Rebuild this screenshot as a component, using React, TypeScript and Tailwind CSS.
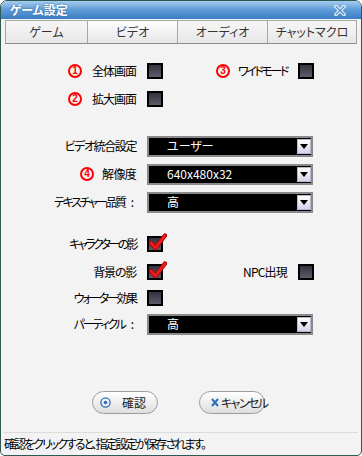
import React from "react";

function Check({ checked = false }: { checked?: boolean }) {
  return (
    <div className="relative w-[16px] h-[16px] shrink-0 border-2 border-black bg-gradient-to-b from-[#33333f] to-[#5c5c6c]">
      {checked && (
        <svg className="absolute left-[-1px] top-[-5px] w-[19px] h-[19px]" viewBox="0 0 19 19">
          <path d="M3 10 L7.5 15 L17 2.5" fill="none" stroke="#a00000" strokeWidth="4.4" strokeLinecap="round" strokeLinejoin="round" />
          <path d="M3 10 L7.5 15 L17 2.5" fill="none" stroke="#f01c1c" strokeWidth="2.8" strokeLinecap="round" strokeLinejoin="round" />
        </svg>
      )}
    </div>
  );
}

function Num({ n, mr = "mr-[10px]" }: { n: string; mr?: string }) {
  return (
    <span
      className={`w-[14px] h-[14px] shrink-0 rounded-full border-2 border-[#ff0000] flex items-center justify-center text-[#ff0000] text-[10px] font-bold leading-none font-['Liberation_Sans',sans-serif] tracking-normal ${mr}`}
    >
      {n}
    </span>
  );
}

function Select({ value }: { value: string }) {
  return (
    <div className="w-[166px] h-[21px] shrink-0 border-2 border-[#8a8a8a] bg-black flex items-center">
      <span className="pl-[18px] text-white text-[12px] leading-none">{value}</span>
      <div className="ml-auto w-[14px] h-[15px] border border-[#b8b8cc] bg-gradient-to-b from-[#ffffff] to-[#d4d4ea] flex items-center justify-center">
        <svg width="8" height="5" viewBox="0 0 8 5">
          <path d="M0 0 L8 0 L4 5 Z" fill="#000" />
        </svg>
      </div>
    </div>
  );
}

function Label({ children, w = "w-[135px]", t = "", colon = false }: { children: React.ReactNode; w?: string; t?: string; colon?: boolean }) {
  return (
    <div className={`${w} shrink-0 flex items-center justify-end text-[12px] text-black leading-none whitespace-nowrap`}>
      <span className={`flex items-center ${t}`}>{children}</span>
      {colon && <span className="ml-[6px] mr-[2px]">:</span>}
    </div>
  );
}

function Tab({ label, w, active = false, first = false }: { label: string; w: string; active?: boolean; first?: boolean }) {
  return (
    <div
      className={`${w} h-full flex items-center justify-center text-[12px] text-[#333] border-t border-r border-[#a6a6a6] ${
        first ? "border-l" : ""
      } ${active ? "bg-gradient-to-b from-[#ffffff] to-[#e6e6e6]" : "bg-gradient-to-b from-[#f6f6f6] to-[#e8e8e8]"}`}
    >
      {label}
    </div>
  );
}

export default function App() {
  return (
    <div className="w-[362px] h-[456px] overflow-hidden rounded-t-[7px] rounded-b-[5px] border border-[#2d5a52] bg-[#f3f3f3] flex flex-col font-['Noto_Sans_CJK_JP',sans-serif] [font-feature-settings:'palt']">
      {/* title bar */}
      <div className="h-[18px] shrink-0 flex items-center justify-between px-[9px] bg-gradient-to-b from-[#a6cdef] via-[#5d9ad6] to-[#3b7cc3]">
        <span className="text-white text-[12px] font-bold leading-none [text-shadow:0_0_2px_#2a5d99]">ゲーム設定</span>
        <svg width="12" height="11" viewBox="0 0 12 11" className="mr-[6px]">
          <path d="M2 1.5 L10 9.5 M10 1.5 L2 9.5" stroke="#e8f4ff" strokeWidth="3.4" strokeLinecap="square" />
          <path d="M2 1.5 L10 9.5 M10 1.5 L2 9.5" stroke="#4a88c8" strokeWidth="1.2" strokeLinecap="square" />
        </svg>
      </div>

      {/* tabs */}
      <div className="h-[24px] shrink-0 mt-[1px] ml-[4px] w-[352px] flex border-b border-[#8c8c8c]">
        <Tab label="ゲーム" w="w-[83px]" first />
        <Tab label="ビデオ" w="w-[90px]" active />
        <Tab label="オーディオ" w="w-[90px]" />
        <Tab label="チャットマクロ" w="w-[89px]" />
      </div>

      {/* body */}
      <div className="flex flex-col mt-[13px]">
        <div className="h-[28px] flex items-center">
          <Label t="tracking-[-1px]">
            <Num n="1" />
            全体画面
          </Label>
          <div className="ml-[11px]">
            <Check />
          </div>
          <Label w="w-[124px]" t="tracking-[-2.4px]">
            <Num n="3" mr="mr-[8px]" />
            ワイドモード
          </Label>
          <div className="ml-[11px]">
            <Check />
          </div>
        </div>
        <div className="h-[28px] flex items-center">
          <Label t="tracking-[-1px]">
            <Num n="2" />
            拡大画面
          </Label>
          <div className="ml-[11px]">
            <Check />
          </div>
        </div>

        <div className="h-[28px] flex items-center mt-[19px]">
          <Label t="tracking-[-1.4px]">ビデオ統合設定</Label>
          <div className="ml-[11px]">
            <Select value="ユーザー" />
          </div>
        </div>
        <div className="h-[28px] flex items-center">
          <Label t="tracking-[-0.7px]">
            <Num n="4" mr="mr-[8px]" />
            解像度
          </Label>
          <div className="ml-[11px]">
            <Select value="640x480x32" />
          </div>
        </div>
        <div className="h-[28px] flex items-center">
          <Label t="tracking-[-2.3px]" colon>テキスチャー品質</Label>
          <div className="ml-[11px]">
            <Select value="高" />
          </div>
        </div>

        <div className="h-[28px] flex items-center mt-[14px]">
          <Label t="tracking-[-2.6px]">キャラクターの影</Label>
          <div className="ml-[11px]">
            <Check checked />
          </div>
        </div>
        <div className="h-[28px] flex items-center">
          <Label t="tracking-[-1.2px]">背景の影</Label>
          <div className="ml-[11px]">
            <Check checked />
          </div>
          <Label w="w-[124px]" t="tracking-[-0.8px]">NPC出現</Label>
          <div className="ml-[11px]">
            <Check />
          </div>
        </div>
        <div className="h-[24px] flex items-center">
          <Label t="tracking-[-2.3px]">ウォーター効果</Label>
          <div className="ml-[11px]">
            <Check />
          </div>
        </div>
        <div className="h-[28px] flex items-center">
          <Label t="tracking-[-2.2px]" colon>パーティクル</Label>
          <div className="ml-[11px]">
            <Select value="高" />
          </div>
        </div>

        {/* buttons */}
        <div className="flex mt-[53px] pl-[91px] gap-[41px]">
          <div className="w-[66px] h-[23px] rounded-full border border-[#9c9c9c] bg-gradient-to-b from-[#ffffff] to-[#dedede] flex items-center text-[12px] text-[#222] whitespace-nowrap">
            <svg width="11" height="11" viewBox="0 0 11 11" className="ml-[7px] shrink-0">
              <circle cx="5.5" cy="5.5" r="4.6" fill="none" stroke="#2b6fbd" strokeWidth="1.3" />
              <circle cx="5.5" cy="5.5" r="1.8" fill="#2b6fbd" />
            </svg>
            <span className="ml-[11px] leading-none">確認</span>
          </div>
          <div className="w-[66px] h-[23px] rounded-full border border-[#9c9c9c] bg-gradient-to-b from-[#ffffff] to-[#dedede] flex items-center text-[12px] text-[#222] whitespace-nowrap">
            <svg width="8" height="9" viewBox="0 0 8 9" className="ml-[11px] shrink-0">
              <path d="M1 1 L7 8 M7 1 L1 8" stroke="#2b6fbd" strokeWidth="2" />
            </svg>
            <span className="ml-[2px] leading-none tracking-[-1.6px]">キャンセル</span>
          </div>
        </div>
      </div>

      {/* footer */}
      <div className="mt-auto h-[23px] mx-[3px] border-t border-[#dcdcdc] flex items-center">
        <span className="text-[12px] text-black leading-none tracking-[-2px] whitespace-nowrap">確認をクリックすると、指定設定が保存されます。</span>
      </div>
    </div>
  );
}
